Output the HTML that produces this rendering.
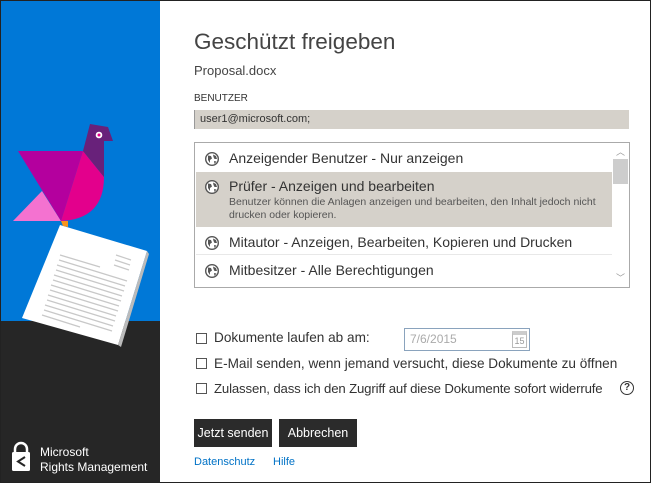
<!DOCTYPE html>
<html><head><meta charset="utf-8"><style>
*{margin:0;padding:0;box-sizing:border-box}
body{width:651px;height:483px;position:relative;overflow:hidden;background:#fff;font-family:"Liberation Sans",sans-serif;color:#333}
.frame{position:absolute;left:0;top:0;width:651px;height:483px;border:1px solid #222;pointer-events:none}
.left{position:absolute;left:0;top:0;width:160px;height:483px;background:#262626}
.blue{position:absolute;left:0;top:0;width:160px;height:321px;background:#0078d7}
.abs{position:absolute;white-space:nowrap}
.row{position:absolute;left:1px;width:416px;font-size:14px;color:#333}
.row .t{position:absolute;left:33px;top:6px}
.globe{position:absolute;left:9px;top:8px}
.cb{position:absolute;width:11px;height:11px;border:1px solid #555;background:#fff}
.btn{position:absolute;top:419px;height:28px;background:#2b2b2b;color:#fff;font-size:12.5px;text-align:center;line-height:28px}
.opt{font-size:13.6px}
</style></head><body>
<div class="left"><div class="blue"></div>
<svg width="160" height="483" style="position:absolute;left:0;top:0">
<polygon points="60,225 147,251 118,345 22,318" fill="#fff"/>
<polygon points="147,251 149,254 121,347 118,345" fill="#bbb"/>
<g stroke="#c8c8c8" stroke-width="1.3">
<line x1="116" y1="255" x2="131" y2="260"/><line x1="115" y1="260" x2="130" y2="265"/><line x1="114" y1="265" x2="129" y2="270"/>
<line x1="60" y1="255" x2="100" y2="267"/><line x1="59" y1="260" x2="127" y2="281"/><line x1="57" y1="265" x2="125" y2="286"/>
<line x1="56" y1="270" x2="124" y2="291"/><line x1="54" y1="275" x2="122" y2="296"/><line x1="53" y1="280" x2="121" y2="301"/>
<line x1="51" y1="285" x2="119" y2="306"/><line x1="50" y1="290" x2="118" y2="311"/><line x1="48" y1="295" x2="116" y2="316"/>
<line x1="47" y1="300" x2="115" y2="321"/><line x1="45" y1="305" x2="113" y2="326"/><line x1="44" y1="310" x2="112" y2="331"/>
<line x1="42" y1="315" x2="80" y2="327"/>
</g>
<polygon points="61,221 68,221 68,227 63,226" fill="#f7941d"/>
<polygon points="13,221 42,191 61,221" fill="#f472d0"/>
<polygon points="18,151 83,151 61,221" fill="#b4009e"/>
<path d="M83,151 L104,177 Q104,219 61,221 Z" fill="#e3008c"/>
<polygon points="90,124 108,127 113,141 104,141 104,177 83,151" fill="#68217a"/>
<circle cx="99" cy="135" r="3.3" fill="#fff"/><circle cx="99" cy="135" r="1.5" fill="#e3008c"/>
<rect x="12" y="452" width="18" height="19" rx="1.5" fill="#fff"/>
<path d="M15,453 v-4 a6,6 0 0 1 12,0 v4" fill="none" stroke="#fff" stroke-width="2.5"/>
<path d="M25,457 L18,461.5 L25,466" fill="none" stroke="#262626" stroke-width="2"/>
</svg>
<div class="abs" style="left:40px;top:445px;color:#fff;font-size:12px;line-height:15px">Microsoft<br>Rights Management</div>
</div>

<div class="abs" style="left:194px;top:29px;font-size:22.5px;color:#444">Geschützt freigeben</div>
<div class="abs" style="left:194px;top:63px;font-size:13px;color:#444">Proposal.docx</div>
<div class="abs" style="left:194px;top:93px;font-size:10px;color:#333">BENUTZER</div>
<div class="abs" style="left:194px;top:110px;width:435px;height:19px;background:#d5d1ca;border-left:1px solid #999;font-size:11px;padding:3px 0 0 5px;color:#333">user1@microsoft.com;</div>

<div class="abs" style="left:194px;top:142px;width:436px;height:146px;border:1px solid #aaa;background:#fff;overflow:hidden">
<svg width="0" height="0" style="position:absolute"><defs><g id="gl"><circle cx="7" cy="7" r="6.3" fill="#fff" stroke="#555" stroke-width="1.4"/><path d="M3,3.5 L6,4 L7,6.5 L5,8 L5,11 L3,8 Z M8,2.5 L11,4 L12,7 L9.5,7 L8.5,5 Z M9,9 L11.5,9.5 L9.5,12 Z" fill="#555"/></g></defs></svg>
<div class="row" style="top:1px;height:28px"><svg class="globe" width="14" height="14"><use href="#gl"/></svg><span class="t">Anzeigender Benutzer - Nur anzeigen</span></div>
<div class="row" style="top:29px;height:55px;background:#d5d1ca"><svg class="globe" width="14" height="14"><use href="#gl"/></svg><span class="t">Prüfer - Anzeigen und bearbeiten</span>
<div class="abs" style="left:33px;top:24px;font-size:10.5px;line-height:13px;color:#555">Benutzer können die Anlagen anzeigen und bearbeiten, den Inhalt jedoch nicht<br>drucken oder kopieren.</div></div>
<div class="row" style="top:85px;height:27px;border-bottom:1px solid #e8e8e8"><svg class="globe" width="14" height="14"><use href="#gl"/></svg><span class="t">Mitautor - Anzeigen, Bearbeiten, Kopieren und Drucken</span></div>
<div class="row" style="top:113px;height:28px"><svg class="globe" width="14" height="14"><use href="#gl"/></svg><span class="t">Mitbesitzer - Alle Berechtigungen</span></div>
<div class="abs" style="left:417px;top:0;width:17px;height:144px;background:#fff">
<div class="abs" style="left:4px;top:2px;font-size:9px;color:#999">︿</div>
<div class="abs" style="left:1px;top:16px;width:15px;height:25px;background:#cdcdcd"></div>
<div class="abs" style="left:4px;top:128px;font-size:9px;color:#999">﹀</div>
</div>
</div>

<div class="cb" style="left:196px;top:333px"></div>
<div class="abs opt" style="left:214px;top:330px">Dokumente laufen ab am:</div>
<div class="abs" style="left:404px;top:328px;width:126px;height:23px;border:1px solid #8aa3bd;font-size:12px;color:#aaa;padding:3px 0 0 5px">7/6/2015
<div class="abs" style="left:107px;top:2px;width:15px;height:17px;border:1px solid #bbb;border-top:4px solid #ccc;font-size:9px;color:#999;text-align:center;line-height:12px">15</div></div>
<div class="cb" style="left:196px;top:358px"></div>
<div class="abs opt" style="left:214px;top:356px">E-Mail senden, wenn jemand versucht, diese Dokumente zu öffnen</div>
<div class="cb" style="left:196px;top:383px"></div>
<div class="abs" style="left:214px;top:381px;font-size:13.2px;letter-spacing:-0.15px">Zulassen, dass ich den Zugriff auf diese Dokumente sofort widerrufe</div>
<div class="abs" style="left:620px;top:381px;width:14px;height:14px;border:1.5px solid #333;border-radius:50%;font-size:10px;font-weight:bold;text-align:center;line-height:11px">?</div>

<div class="btn" style="left:194px;width:78px">Jetzt senden</div>
<div class="btn" style="left:279px;width:78px">Abbrechen</div>
<div class="abs" style="left:194px;top:456px;font-size:11px;color:#0072c6">Datenschutz</div>
<div class="abs" style="left:273px;top:456px;font-size:11px;color:#0072c6">Hilfe</div>
<div class="frame"></div>
</body></html>
